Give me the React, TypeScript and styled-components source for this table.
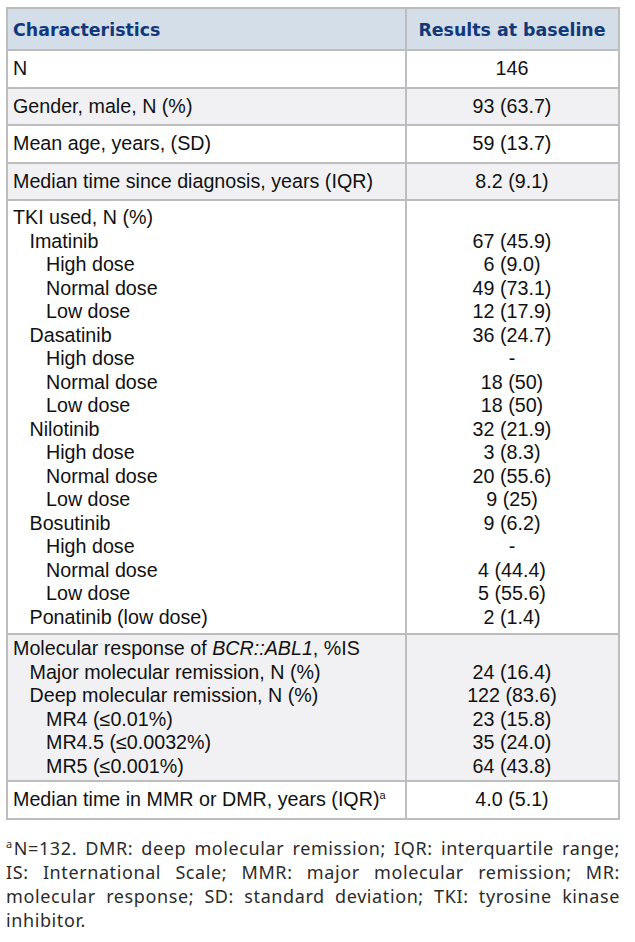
import React from "react";
import styled, { createGlobalStyle } from "styled-components";

const GlobalStyle = createGlobalStyle`
  html, body {
    margin: 0;
    padding: 0;
    background: #ffffff;
  }
`;

const sans = `"Liberation Sans", Arimo, Arial, Helvetica, sans-serif`;

const Page = styled.div`
  padding: 7px 15px 0 6px;
  width: 614px;
`;

const Table = styled.table`
  width: 614px;
  border-collapse: collapse;
  table-layout: fixed;
  font-family: ${sans};
  font-size: 19.7px;
  color: #111;
  border: 2px solid #bdbdbd;
`;

const HeadCell = styled.th<{ $center?: boolean }>`
  background: #d3dee8;
  color: #12387a;
  font-family: "DejaVu Sans", "Open Sans", sans-serif;
  font-weight: 700;
  font-size: 17.4px;
  line-height: 24px;
  padding: 9px 6px 7px 5px;
  text-align: ${(p) => (p.$center ? "center" : "left")};
  border: 2px solid #bdbdbd;
`;

const Row = styled.tr<{ $shaded: boolean }>`
  background: ${(p) => (p.$shaded ? "#f1f1f3" : "#ffffff")};
`;

const Cell = styled.td<{ $center?: boolean; $multi?: "tall" | "short" | "" }>`
  border: 2px solid #bdbdbd;
  font-family: ${sans};
  font-size: 19.7px;
  padding: ${(p) =>
    p.$multi === "tall" ? "5px 6px 4px 5px" : p.$multi === "short" ? "2px 6px 2px 5px" : "6px 6px 6px 5px"};
  text-align: ${(p) => (p.$center ? "center" : "left")};
  vertical-align: top;
  line-height: 23.5px;
`;

const TextLine = styled.div<{ $level: number }>`
  padding-left: ${(p) => p.$level * 16.5}px;
  white-space: nowrap;
`;

const Sup = styled.span`
  display: inline-block;
  font-size: 11px;
  line-height: 11px;
  vertical-align: top;
  margin: 2px 1px 0 0;
`;

const Note = styled.p`
  margin: 16px 0 0;
  font-family: "Noto Sans", "Open Sans", sans-serif;
  font-size: 18px;
  letter-spacing: 0.6px;
  line-height: 24px;
  color: #2b2b2b;
  text-align: justify;
  width: 614px;
`;

type Line = { text: React.ReactNode; value?: string; level?: number };

const blocks: Line[][] = [
  [{ text: "N", value: "146" }],
  [{ text: "Gender, male, N (%)", value: "93 (63.7)" }],
  [{ text: "Mean age, years, (SD)", value: "59 (13.7)" }],
  [{ text: "Median time since diagnosis, years (IQR)", value: "8.2 (9.1)" }],
  [
    { text: "TKI used, N (%)" },
    { text: "Imatinib", value: "67 (45.9)", level: 1 },
    { text: "High dose", value: "6 (9.0)", level: 2 },
    { text: "Normal dose", value: "49 (73.1)", level: 2 },
    { text: "Low dose", value: "12 (17.9)", level: 2 },
    { text: "Dasatinib", value: "36 (24.7)", level: 1 },
    { text: "High dose", value: "-", level: 2 },
    { text: "Normal dose", value: "18 (50)", level: 2 },
    { text: "Low dose", value: "18 (50)", level: 2 },
    { text: "Nilotinib", value: "32 (21.9)", level: 1 },
    { text: "High dose", value: "3 (8.3)", level: 2 },
    { text: "Normal dose", value: "20 (55.6)", level: 2 },
    { text: "Low dose", value: "9 (25)", level: 2 },
    { text: "Bosutinib", value: "9 (6.2)", level: 1 },
    { text: "High dose", value: "-", level: 2 },
    { text: "Normal dose", value: "4 (44.4)", level: 2 },
    { text: "Low dose", value: "5 (55.6)", level: 2 },
    { text: "Ponatinib (low dose)", value: "2 (1.4)", level: 1 },
  ],
  [
    {
      text: (
        <>
          Molecular response of <em>BCR::ABL1</em>, %IS
        </>
      ),
    },
    { text: "Major molecular remission, N (%)", value: "24 (16.4)", level: 1 },
    { text: "Deep molecular remission, N (%)", value: "122 (83.6)", level: 1 },
    { text: "MR4 (≤0.01%)", value: "23 (15.8)", level: 2 },
    { text: "MR4.5 (≤0.0032%)", value: "35 (24.0)", level: 2 },
    { text: "MR5 (≤0.001%)", value: "64 (43.8)", level: 2 },
  ],
  [
    {
      text: (
        <>
          Median time in MMR or DMR, years (IQR)<Sup>a</Sup>
        </>
      ),
      value: "4.0 (5.1)",
    },
  ],
];

export default function App() {
  return (
    <Page>
      <GlobalStyle />
      <Table>
        <colgroup>
          <col style={{ width: 399 }} />
          <col />
        </colgroup>
        <thead>
          <tr>
            <HeadCell>Characteristics</HeadCell>
            <HeadCell $center>Results at baseline</HeadCell>
          </tr>
        </thead>
        <tbody>
          {blocks.map((lines, i) => {
            const kind = lines.length > 10 ? "tall" : lines.length > 1 ? "short" : "";
            return (
              <Row key={i} $shaded={i % 2 === 1}>
                <Cell $multi={kind}>
                  {lines.map((l, j) => (
                    <TextLine key={j} $level={l.level ?? 0}>
                      {l.text}
                    </TextLine>
                  ))}
                </Cell>
                <Cell $center $multi={kind}>
                  {lines.map((l, j) => (
                    <TextLine key={j} $level={0}>
                      {l.value ?? "\u00a0"}
                    </TextLine>
                  ))}
                </Cell>
              </Row>
            );
          })}
        </tbody>
      </Table>
      <Note>
        <Sup>a</Sup>N=132. DMR: deep molecular remission; IQR: interquartile range;
        IS: International Scale; MMR: major molecular remission; MR: molecular
        response; SD: standard deviation; TKI: tyrosine kinase inhibitor.
      </Note>
    </Page>
  );
}
